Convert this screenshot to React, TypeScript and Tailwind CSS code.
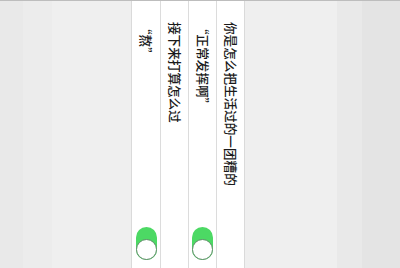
const rows = [
  { label: '“熬”', toggle: true },
  { label: '接下来打算怎么过', toggle: false },
  { label: '“正常发挥啊”', toggle: true },
  { label: '你是怎么把生活过的一团糟的', toggle: false },
];

function Toggle() {
  return (
    <div className="flex h-[33px] w-[21px] flex-col justify-end rounded-full bg-[#4cd964]">
      <div className="h-[21px] w-[21px] rounded-full border border-[#5f8c68] bg-white" />
    </div>
  );
}

export default function App() {
  return (
    <div className="flex h-[268px] w-[400px] flex-col overflow-hidden bg-[#efefef] font-['Noto_Sans_CJK_SC',sans-serif]">
      <div className="h-px w-full bg-[#bdbdbd]" />
      <div className="flex flex-1">
        {/* left grey area */}
        <div className="w-[131px] bg-[linear-gradient(to_right,#e9e9e9_0,#e9e9e9_23px,#ececec_23px,#ececec_52px,#efefef_52px)]" />

        {/* cells, rotated list */}
        <div className="flex border-x border-[#dadada]">
          {rows.map((row, i) => (
            <div
              key={i}
              className={`flex w-[28px] flex-col items-center justify-between bg-white pb-[8px] pt-[21px] ${i > 0 ? 'border-l border-[#dcdcdc]' : ''}`}
            >
              <span className="text-[12.6px] font-medium leading-none text-[#1a1a1a] [text-orientation:sideways] [writing-mode:vertical-rl]">
                {row.label}
              </span>
              {row.toggle && <Toggle />}
            </div>
          ))}
        </div>

        {/* right grey area */}
        <div className="flex-1 bg-[linear-gradient(to_right,#efefef_0,#efefef_92px,#e9e9e9_92px,#e9e9e9_117px,#e4e4e4_117px)]" />
      </div>
    </div>
  );
}
